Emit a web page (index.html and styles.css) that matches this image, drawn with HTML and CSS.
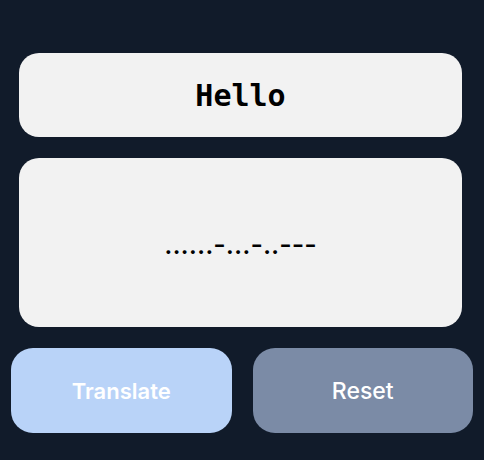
FILE: index.html
```html
<!DOCTYPE html>
<html lang="en">
<head>
<meta charset="utf-8">
<title>Morse Translator</title>
<link rel="stylesheet" href="styles.css">
</head>
<body>
<main class="app">
  <div class="card card-input">Hello</div>
  <div class="card card-output">......-...-..---</div>
  <div class="actions">
    <button class="btn btn-translate">Translate</button>
    <button class="btn btn-reset">Reset</button>
  </div>
</main>
</body>
</html>
```
FILE: styles.css
```css
html, body {
  margin: 0;
  padding: 0;
  background: #111b2a;
  height: 100%;
}
.app {
  box-sizing: border-box;
  padding: 53px 11px 0 11px;
  display: flex;
  flex-direction: column;
  gap: 21px;
}
.card {
  background: #f2f2f2;
  border-radius: 20px;
  margin: 0 11px 0 8px;
  display: flex;
  align-items: center;
  justify-content: center;
  color: #000;
}
.card-input {
  height: 84px;
  font-family: "DejaVu Sans Mono", monospace;
  font-weight: bold;
  font-size: 30px;
}
.card-output {
  height: 169px;
  font-family: Inter, sans-serif;
  font-weight: 500;
  font-size: 27px;
  padding-top: 3px;
  box-sizing: border-box;
}
.actions {
  display: grid;
  grid-template-columns: 1fr 1fr;
  gap: 21px;
}
.btn {
  height: 85px;
  border: none;
  border-radius: 22px;
  color: #fff;
  font-family: Inter, sans-serif;
  font-size: 22px;
  padding: 0;
}
.btn-translate {
  background: #b9d3f8;
  font-weight: 600;
}
.btn-reset {
  background: #7b8ba6;
  font-weight: 500;
  font-size: 23px;
}
```
